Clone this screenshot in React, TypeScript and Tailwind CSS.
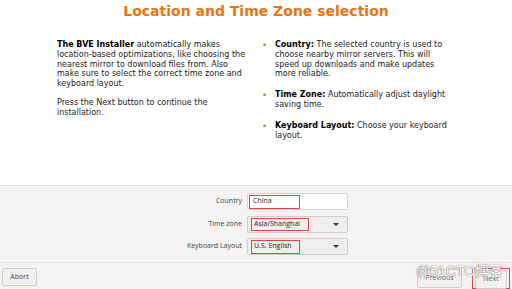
import React from "react";

const Bullet = ({ title, children }: { title: string; children: React.ReactNode }) => (
  <li className="flex">
    <span className="w-[13px] shrink-0 text-[#e8750e] text-[9px] leading-[10px]">•</span>
    <span>
      <b className="font-bold text-black">{title}</b> {children}
    </span>
  </li>
);

export default function App() {
  return (
    <div
      className="w-[512px] h-[289px] bg-white flex flex-col overflow-hidden relative"
      style={{ fontFamily: '"DejaVu Sans", sans-serif' }}
    >
      <h1 className="text-center text-[14px] leading-[18px] font-bold text-[#e8750e] pt-[2px]">
        Location and Time Zone selection
      </h1>
      <div className="flex h-[166px] pt-[20px] text-[8px] leading-[9.8px] text-[#222]">
        <div className="ml-[57px] w-[192px]">
          <p>
            <b className="font-bold text-black">The BVE Installer</b> automatically makes location-based
            optimizations, like choosing the nearest mirror to download files from. Also make sure to
            select the correct time zone and keyboard layout.
          </p>
          <p className="mt-[9px]">Press the Next button to continue the installation.</p>
        </div>
        <ul className="ml-[13px] w-[185px] flex flex-col gap-[11px]">
          <Bullet title="Country:">
            The selected country is used to choose nearby mirror servers. This will speed up downloads
            and make updates more reliable.
          </Bullet>
          <Bullet title="Time Zone:">Automatically adjust daylight saving time.</Bullet>
          <Bullet title="Keyboard Layout:">Choose your keyboard layout.</Bullet>
        </ul>
      </div>
      <div
        className="flex-1 bg-[#f4f3f1] border-t border-[#e4e2df] flex flex-col"
        style={{ fontFamily: '"Open Sans", "Noto Sans", sans-serif' }}
      >
        <div className="flex flex-col gap-[5.5px] pt-[7px] h-[76px] text-[7px] text-[#444]">
          <div className="flex items-center">
            <span className="w-[242px] text-right">Country</span>
            <div className="ml-[5px] w-[101px] h-[17px] bg-white border border-[#d6d3cf] rounded-[2px] flex items-center pl-[1px]">
              <span className="border border-[#e0454a] w-[51px] h-[14px] flex items-center pl-[3px] text-[#222]">China</span>
            </div>
          </div>
          <div className="flex items-center">
            <span className="w-[242px] text-right">Time zone</span>
            <div className="ml-[5px] w-[101px] h-[17px] bg-[#f0efed] border border-[#d0cdc9] rounded-[2px] flex items-center pl-[3px] pr-[8px]">
              <span className="border border-[#e0454a] w-[58px] h-[13px] flex items-center pl-[2px] text-[#222]">Asia/Shanghai</span>
              <span className="ml-auto w-0 h-0 border-l-[3px] border-r-[3px] border-t-[3px] border-l-transparent border-r-transparent border-t-[#333]" />
            </div>
          </div>
          <div className="flex items-center">
            <span className="w-[242px] text-right">Keyboard Layout</span>
            <div className="ml-[5px] w-[101px] h-[17px] bg-[#f0efed] border border-[#d0cdc9] rounded-[2px] flex items-center pl-[3px] pr-[8px]">
              <span className="border border-[#e0454a] w-[49px] h-[14px] flex items-center pl-[2px] text-[#222]">U.S. English</span>
              <span className="ml-auto w-0 h-0 border-l-[3px] border-r-[3px] border-t-[3px] border-l-transparent border-r-transparent border-t-[#333]" />
            </div>
          </div>
        </div>
        <div className="h-px bg-[#e4e2df]" />
        <div className="flex items-start pt-[5px] px-[2px] text-[7px] text-[#444]">
          <button className="w-[35px] h-[18px] border border-[#d0cdc9] rounded-[2px] bg-[#f2f1ef]">Abort</button>
          <button className="ml-auto w-[45px] h-[19px] border border-[#d0cdc9] rounded-[2px] bg-[#f2f1ef] mt-[1px] text-[#666]">Previous</button>
          <div className="ml-[10px] w-[38px] h-[21px] border border-[#e0454a] flex items-start justify-center pt-[1px]">
            <button className="w-[32px] h-[19px] border border-[#d0cdc9] rounded-[2px] bg-[#f2f1ef] text-[#666]">Next</button>
          </div>
        </div>
      </div>
      <span
        className="absolute left-[416px] top-[263px] text-[14px] leading-[17px] text-white"
        style={{
          fontFamily: '"Liberation Sans", "Noto Sans CJK SC", sans-serif',
          textShadow: "0 0 1px #666, 0 0 1px #666",
        }}
      >
        @51CTO博客
      </span>
    </div>
  );
}
